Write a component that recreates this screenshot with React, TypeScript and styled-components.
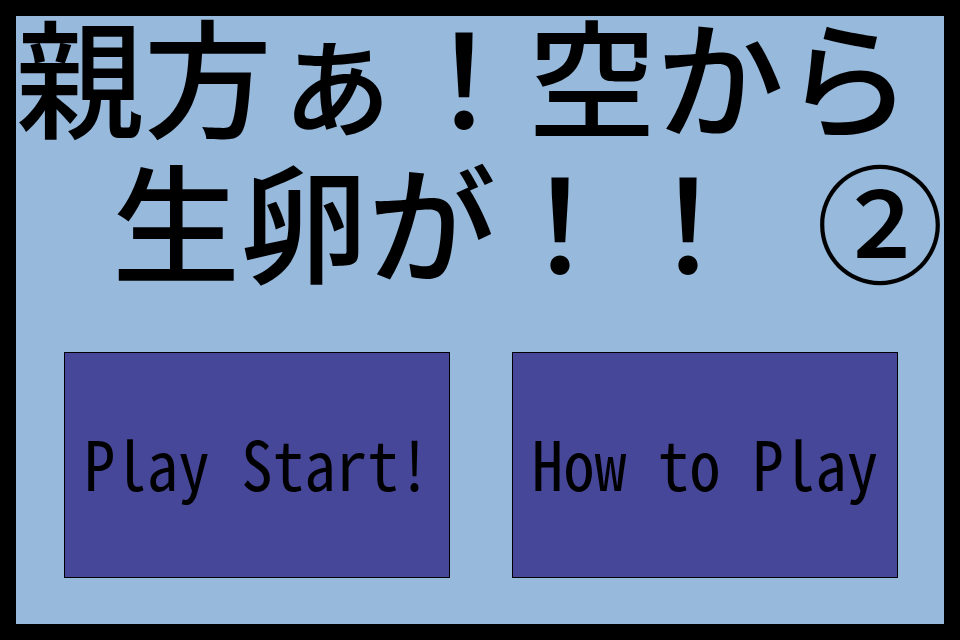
import React from "react";
import styled, { createGlobalStyle } from "styled-components";

const GlobalStyle = createGlobalStyle`
	html,
	body {
		margin: 0;
		padding: 0;
		background: #000;
	}
`;

const Frame = styled.div`
	width: 960px;
	height: 640px;
	box-sizing: border-box;
	border: 16px solid #000;
	background-color: #96b9dc;
	display: flex;
	flex-direction: column;
	overflow: hidden;
`;

const Title = styled.h1`
	margin: -15px 0 0;
	font-family: "Noto Sans CJK JP", "Noto Sans", sans-serif;
	font-weight: 500;
	font-size: 128px;
	line-height: 145px;
	color: #000;
	display: flex;
	flex-direction: column;
`;

const TitleLine = styled.span<{ $align: "left" | "right" }>`
	display: block;
	white-space: pre;
	text-align: ${(props) => props.$align};
`;

const Menu = styled.div`
	margin-top: 61px;
	padding-left: 48px;
	display: flex;
	gap: 62px;
`;

const MenuButton = styled.button`
	width: 386px;
	height: 226px;
	box-sizing: border-box;
	border: 1px solid #000;
	border-radius: 0;
	background-color: #47479a;
	color: #000;
	font-family: "Noto Sans Mono CJK JP", "DejaVu Sans Mono", monospace;
	font-size: 63px;
	padding: 0 0 8px;
	display: flex;
	align-items: center;
	justify-content: center;
	cursor: pointer;
`;

const Label = styled.span`
	display: inline-block;
	transform: scaleY(1.07);
`;

function App() {
	return (
		<>
			<GlobalStyle />
			<Frame>
				<Title>
					<TitleLine $align="left">親方ぁ！空から</TitleLine>
					<TitleLine $align="right">{"生卵が！！\u2002②"}</TitleLine>
				</Title>
				<Menu>
					<MenuButton>
						<Label>Play Start!</Label>
					</MenuButton>
					<MenuButton>
						<Label>How to Play</Label>
					</MenuButton>
				</Menu>
			</Frame>
		</>
	);
}

export default App;
